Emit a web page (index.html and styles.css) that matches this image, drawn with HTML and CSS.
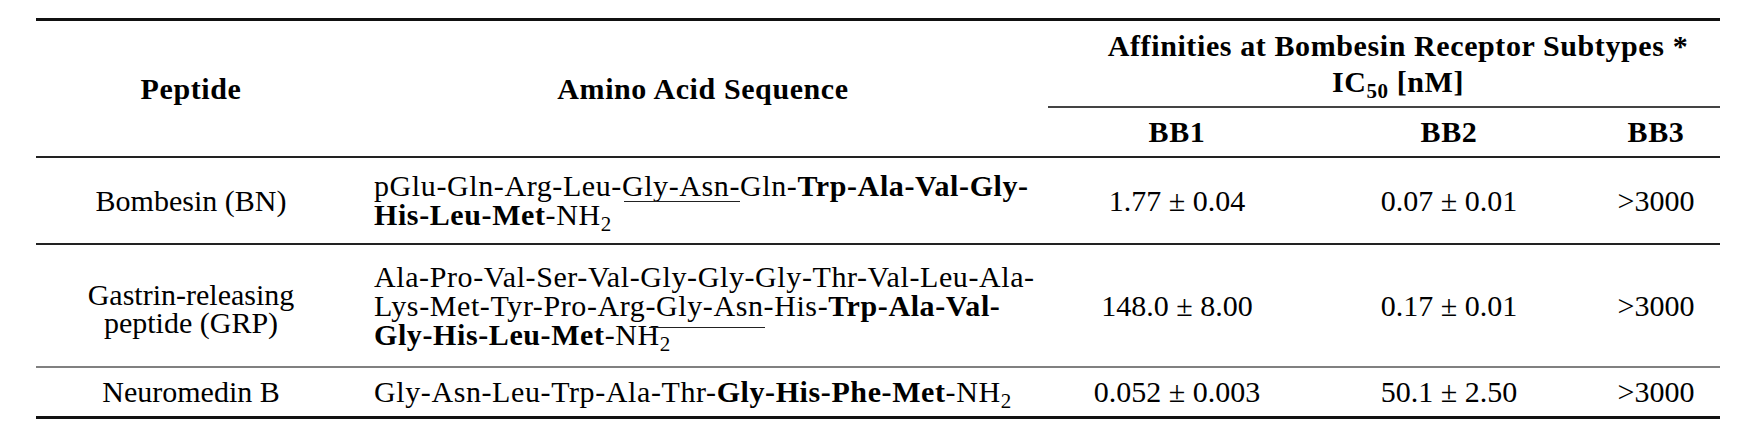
FILE: index.html
```html
<!DOCTYPE html>
<html>
<head>
<meta charset="utf-8">
<title>Bombesin receptor affinities</title>
<link rel="stylesheet" href="styles.css">
</head>
<body>
<table class="data">
  <colgroup>
    <col class="w-pep">
    <col class="w-seq">
    <col class="w-bb1">
    <col class="w-bb2">
    <col class="w-bb3">
  </colgroup>
  <thead>
    <tr class="hr1">
      <th class="pep" rowspan="2">Peptide</th>
      <th class="seqh" rowspan="2">Amino Acid Sequence</th>
      <th class="aff" colspan="3">Affinities at Bombesin Receptor Subtypes *<br>IC<sub class="ic">50</sub> [nM]</th>
    </tr>
    <tr class="hr2">
      <th>BB1</th>
      <th>BB2</th>
      <th>BB3</th>
    </tr>
  </thead>
  <tbody>
    <tr class="r1">
      <td class="name">Bombesin (BN)</td>
      <td class="seq">pGlu-Gln-Arg-Leu-<span class="ul ul-a">Gly-Asn</span>-Gln-<b>Trp-Ala-Val-Gly-</b><br><b>His-Leu-Met</b>-NH<sub>2</sub></td>
      <td>1.77 ± 0.04</td>
      <td>0.07 ± 0.01</td>
      <td>&gt;3000</td>
    </tr>
    <tr class="r2">
      <td class="name name-2">Gastrin-releasing<br>peptide (GRP)</td>
      <td class="seq">Ala-Pro-Val-Ser-Val-Gly-Gly-Gly-Thr-Val-Leu-Ala-<br>Lys-Met-Tyr-Pro-Arg-<span class="ul ul-b">Gly-Asn</span>-His-<b>Trp-Ala-Val-</b><br><b>Gly-His-Leu-Met</b>-NH<sub>2</sub></td>
      <td>148.0 ± 8.00</td>
      <td>0.17 ± 0.01</td>
      <td>&gt;3000</td>
    </tr>
    <tr class="r3">
      <td class="name">Neuromedin B</td>
      <td class="seq">Gly-Asn-Leu-Trp-Ala-Thr-<b>Gly-His-Phe-Met</b>-NH<sub>2</sub></td>
      <td>0.052 ± 0.003</td>
      <td>50.1 ± 2.50</td>
      <td>&gt;3000</td>
    </tr>
  </tbody>
</table>
</body>
</html>
```

FILE: styles.css
```css
html, body {
  margin: 0;
  padding: 0;
  background: #ffffff;
}

.data {
  margin: 18px 0 0 36px;
  width: 1684px;
  border-collapse: collapse;
  table-layout: fixed;
  font-family: "Liberation Serif", "Times New Roman", serif;
  font-size: 30px;
  line-height: 27px;
  color: #000;
  border-top: 3px solid #111;
  border-bottom: 3px solid #111;
}

.w-pep { width: 322px; }
.w-seq { width: 690px; }
.w-bb1 { width: 258px; }
.w-bb2 { width: 286px; }
.w-bb3 { width: 128px; }

.data th,
.data td {
  padding: 0;
  text-align: center;
  vertical-align: middle;
  white-space: nowrap;
}

.data th {
  font-weight: bold;
  letter-spacing: 0.6px;
}

.data th.pep,
.data td.name {
  padding-right: 12px;
}

.data thead {
  border-bottom: 2px solid #222;
}

.hr1 { height: 87px; }
.hr2 { height: 50px; }

.data th.aff {
  line-height: 36px;
  border-bottom: 2px solid #444;
  padding-top: 2px;
  padding-left: 28px;
}

.data sub {
  font-size: 0.7em;
  line-height: 0;
  vertical-align: -0.28em;
}

.r1 { height: 87px; }
.r2 { height: 123px; }
.r3 { height: 51px; }

.r1 td { border-bottom: 2px solid #222; }
.r2 td { border-bottom: 2px solid #808080; }

.data td.name-2 {
  line-height: 28px;
  padding-top: 8px;
}

.data td.seq {
  text-align: left;
  padding-left: 16px;
  line-height: 29px;
  letter-spacing: 0.6px;
}

.ul {
  position: relative;
}

.ul::after {
  content: "";
  position: absolute;
  width: 116px;
  border-top: 1px solid #222;
}

.ul-a::after {
  left: 2px;
  top: 32px;
}

.ul-b::after {
  left: -7px;
  top: 38px;
}
```
